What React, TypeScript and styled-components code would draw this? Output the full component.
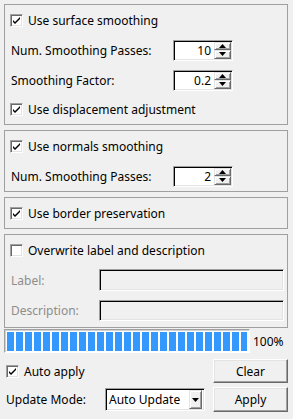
import React from 'react';
import styled, { createGlobalStyle } from 'styled-components';

const GlobalStyle = createGlobalStyle`
  html, body {
    margin: 0;
    padding: 0;
    background: #f0f0f0;
  }
  body {
    font-family: "Noto Sans", "Open Sans", sans-serif;
    font-size: 12px;
    color: #000;
  }
`;

const Page = styled.div`
  width: 293px;
  height: 419px;
  box-sizing: border-box;
  padding: 4px 5px 0 4px;
  display: flex;
  flex-direction: column;
  background: #f0f0f0;
`;

const Group = styled.div<{ $rows: string; $pb?: number; $mb?: number }>`
  border: 1px solid #a0a0a0;
  display: grid;
  grid-template-rows: ${p => p.$rows};
  padding: 0 3px ${p => p.$pb ?? 0}px 6px;
  margin-bottom: ${p => p.$mb ?? 5}px;
`;

const Row = styled.div`
  display: flex;
  align-items: center;
`;

const FieldRow = styled.div<{ $labelWidth: number }>`
  display: grid;
  grid-template-columns: ${p => p.$labelWidth}px auto 1fr;
  align-items: center;
`;

const Label = styled.span<{ $disabled?: boolean }>`
  color: ${p => (p.$disabled ? '#8d8d8d' : '#000')};
  white-space: nowrap;
`;

const Box = styled.span`
  width: 13px;
  height: 13px;
  box-sizing: border-box;
  background: #fff;
  border: 1px solid;
  border-color: #a0a0a0 #fff #fff #a0a0a0;
  box-shadow: inset 1px 1px 0 #696969, inset -1px -1px 0 #e3e3e3;
  display: inline-flex;
  align-items: center;
  justify-content: center;
  margin-right: 5px;
  flex: none;
`;

const CheckLabel = styled.label<{ $indent?: number }>`
  display: flex;
  align-items: center;
  margin-left: ${p => p.$indent ?? -1}px;
  white-space: nowrap;
`;

const Check = ({ checked, label, indent }: { checked: boolean; label: string; indent?: number }) => (
  <CheckLabel $indent={indent}>
    <Box>
      {checked && (
        <svg width="9" height="9" viewBox="0 0 9 9">
          <path d="M1 4 L3 6 L8 1 L8 3 L3 8 L1 6 Z" fill="#000" />
        </svg>
      )}
    </Box>
    {label}
  </CheckLabel>
);

const Sunken = styled.div<{ $w: number; $h: number; $bg?: string }>`
  width: ${p => p.$w}px;
  height: ${p => p.$h}px;
  box-sizing: border-box;
  background: ${p => p.$bg ?? '#fff'};
  border: 1px solid;
  border-color: #a0a0a0 #fff #fff #a0a0a0;
  box-shadow: inset 1px 1px 0 #000, inset -1px -1px 0 #e3e3e3;
  display: flex;
  align-items: center;
`;

const SpinValue = styled.span`
  flex: 1;
  text-align: right;
  padding-right: 3px;
`;

const SpinButtons = styled.div`
  display: flex;
  flex-direction: column;
  width: 17px;
  height: 17px;
  margin-right: 1px;
`;

const RaisedBtn = styled.div`
  flex: 1;
  box-sizing: border-box;
  background: #f0f0f0;
  border: 1px solid;
  border-color: #e3e3e3 #696969 #696969 #e3e3e3;
  box-shadow: inset 1px 1px 0 #fff, inset -1px -1px 0 #a0a0a0;
  display: flex;
  align-items: center;
  justify-content: center;
`;

const Spin = ({ value }: { value: string }) => (
  <Sunken $w={60} $h={21}>
    <SpinValue>{value}</SpinValue>
    <SpinButtons>
      <RaisedBtn>
        <svg width="7" height="4" viewBox="0 0 7 4">
          <path d="M3.5 0 L7 4 L0 4 Z" fill="#000" />
        </svg>
      </RaisedBtn>
      <RaisedBtn>
        <svg width="7" height="4" viewBox="0 0 7 4">
          <path d="M0 0 L7 0 L3.5 4 Z" fill="#000" />
        </svg>
      </RaisedBtn>
    </SpinButtons>
  </Sunken>
);

const ProgressRow = styled.div`
  display: flex;
  align-items: center;
  margin-top: -2px;
  height: 24px;
`;

const ProgressTrack = styled.div`
  width: 246px;
  height: 24px;
  box-sizing: border-box;
  border: 1px solid;
  border-color: #a0a0a0 #fff #fff #a0a0a0;
  box-shadow: inset 1px 1px 0 #d0d0d0;
  background: #fff;
  padding: 2px 2px 1px 2px;
`;

const ProgressFill = styled.div`
  height: 100%;
  background: repeating-linear-gradient(
    to right,
    #3399ff 0,
    #3399ff 7px,
    #fff 7px,
    #fff 9px
  );
`;

const Percent = styled.span`
  margin-left: 3px;
`;

const Bottom = styled.div`
  display: grid;
  grid-template-columns: 1fr 75px;
  grid-template-rows: 24px 25px;
  row-gap: 4px;
  margin-top: 6px;
`;

const Button = styled.div`
  box-sizing: border-box;
  background: #f0f0f0;
  border: 1px solid;
  border-color: #fff #696969 #696969 #fff;
  box-shadow: inset -1px -1px 0 #a0a0a0, inset 1px 1px 0 #e3e3e3;
  display: flex;
  align-items: center;
  justify-content: center;
`;

const ModeRow = styled.div`
  display: flex;
  align-items: center;
  padding-left: 2px;
`;

const Combo = styled.div`
  width: 100px;
  height: 23px;
  margin-left: auto;
  margin-right: 8px;
  box-sizing: border-box;
  background: #fff;
  border: 1px solid;
  border-color: #a0a0a0 #fff #fff #a0a0a0;
  box-shadow: inset 1px 1px 0 #000, inset -1px -1px 0 #e3e3e3;
  display: flex;
  align-items: center;
  padding-left: 3px;
`;

const ComboText = styled.span`
  flex: 1;
`;

const ComboArrow = styled(RaisedBtn)`
  flex: none;
  width: 13px;
  height: 19px;
  margin-right: 2px;
`;

export default function App() {
  return (
    <Page>
      <GlobalStyle />
      <Group $rows="30px 30px 30px 29px">
        <Row><Check checked label="Use surface smoothing" /></Row>
        <FieldRow $labelWidth={162}>
          <Label>Num. Smoothing Passes:</Label>
          <Spin value="10" />
        </FieldRow>
        <FieldRow $labelWidth={162}>
          <Label>Smoothing Factor:</Label>
          <Spin value="0.2" />
        </FieldRow>
        <Row><Check checked label="Use displacement adjustment" /></Row>
      </Group>
      <Group $rows="30px 30px">
        <Row><Check checked label="Use normals smoothing" /></Row>
        <FieldRow $labelWidth={162}>
          <Label>Num. Smoothing Passes:</Label>
          <Spin value="2" />
        </FieldRow>
      </Group>
      <Group $rows="30px">
        <Row><Check checked label="Use border preservation" /></Row>
      </Group>
      <Group $rows="30px 30px 30px" $pb={2} $mb={3}>
        <Row><Check checked={false} label="Overwrite label and description" /></Row>
        <FieldRow $labelWidth={88}>
          <Label $disabled>Label:</Label>
          <Sunken $w={185} $h={22} $bg="#f0f0f0" />
        </FieldRow>
        <FieldRow $labelWidth={88}>
          <Label $disabled>Description:</Label>
          <Sunken $w={185} $h={21} $bg="#f0f0f0" />
        </FieldRow>
      </Group>
      <ProgressRow>
        <ProgressTrack>
          <ProgressFill style={{ width: '100%' }} />
        </ProgressTrack>
        <Percent>100%</Percent>
      </ProgressRow>
      <Bottom>
        <ModeRow>
          <Check checked label="Auto apply" indent={0} />
        </ModeRow>
        <Button>Clear</Button>
        <ModeRow>
          <Label>Update Mode:</Label>
          <Combo>
            <ComboText>Auto Update</ComboText>
            <ComboArrow>
              <svg width="7" height="4" viewBox="0 0 7 4">
                <path d="M0 0 L7 0 L3.5 4 Z" fill="#000" />
              </svg>
            </ComboArrow>
          </Combo>
        </ModeRow>
        <Button>Apply</Button>
      </Bottom>
    </Page>
  );
}
